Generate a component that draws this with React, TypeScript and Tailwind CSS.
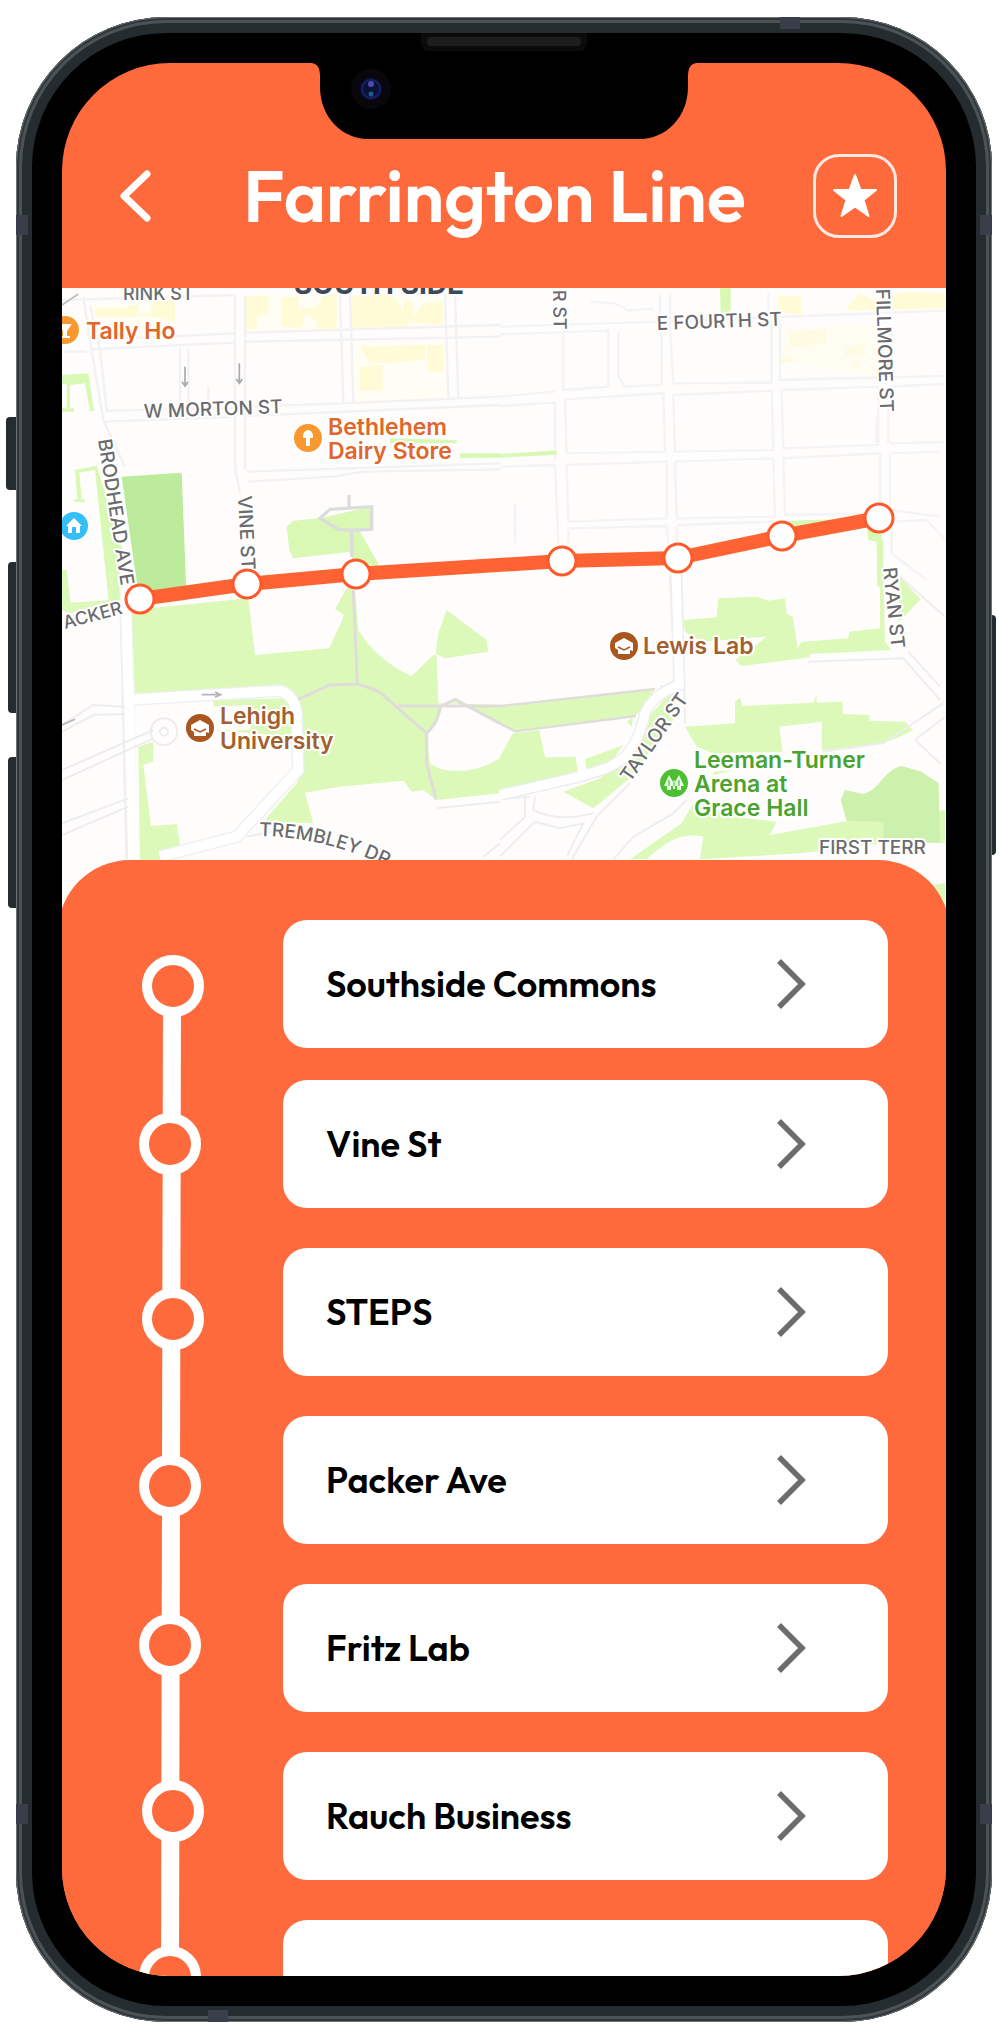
import React from 'react';

const stops = ['Southside Commons', 'Vine St', 'STEPS', 'Packer Ave', 'Fritz Lab', 'Rauch Business', ''];

/* Stations of the route diagram, in the diagram's own units */
const stations = [
  [34, 66],
  [31, 224],
  [34, 399],
  [31, 566],
  [31, 725],
  [34, 891],
  [31, 1057],
];

const routePoints = [
  [140, 599],
  [247, 584],
  [356, 574],
  [562, 561],
  [678, 558],
  [782, 536],
  [879, 518],
];

function Notch() {
  return (
    <div className="pointer-events-none absolute inset-x-0 top-0 z-20 flex justify-center">
      <svg viewBox="0 16 400 76" className="h-[76px] w-[400px]" aria-hidden="true">
        <path d="M0 0H400V16H393C387 16 384 21 384 29V40C384 70 362 92 336 92H64C38 92 16 70 16 40V29C16 21 13 16 7 16H0Z" fill="#000" />
        <circle cx="67" cy="42" r="20" fill="#0a070c" />
        <circle cx="67" cy="42" r="11" fill="#0b1238" />
        <circle cx="67" cy="42" r="9" fill="none" stroke="#13206a" strokeWidth="2" />
        <circle cx="67" cy="37" r="3" fill="#4d4aa8" />
        <circle cx="67" cy="47" r="2.5" fill="#1f5a8c" />
      </svg>
    </div>
  );
}

function CapIcon({ x, y }: { x: number; y: number }) {
  return (
    <g transform={`translate(${x} ${y})`}>
      <circle r="16" fill="#fff" />
      <circle r="14" fill="#a9561f" />
      <path d="M-9 -3L0 -8L9 -3V5L6 4V8H-6V4L-9 2Z" fill="#fff" />
      <path d="M-6 1L0 4L6 1" fill="none" stroke="#a9561f" strokeWidth="1.5" />
    </g>
  );
}

function Halo(props: React.SVGProps<SVGTextElement>) {
  return <text stroke="#fff" strokeWidth="4" strokeLinejoin="round" paintOrder="stroke" {...props} />;
}

function CityMap() {
  return (
    <svg
      viewBox="62 288 884 640"
      preserveAspectRatio="xMidYMin slice"
      className="block h-[640px] w-full font-['Inter','Liberation_Sans',sans-serif]"
      role="img"
      aria-label="Map of the Farrington Line"
    >
      <rect x="62" y="288" width="884" height="640" fill="#fefdfc" />

      {/* north west blocks */}
      <g transform="translate(50 280) scale(.33333)">
        <g fill="#fffdf4">
          <path d="M120 75L375 60V165L130 180Z" />
          <path d="M585 45L865 40V150L585 158Z" />
          <path d="M900 40H1180V145L900 150Z" />
          <path d="M900 190L1190 180V355L905 370Z" />
        </g>
        <g fill="#fffbd6">
          <path d="M135 85H235V75H265V100H300L310 65L375 55V125L310 110H135Z" />
          <path d="M585 50L655 45V100L620 110V148L585 150Z" />
          <path d="M695 52H745V88L800 80L820 45H860V150H800V125L770 100L750 148L695 135Z" />
          <path d="M900 48L1030 45L1060 100V65H1090V110L1120 70L1180 65V135L1090 125L1060 142L900 145Z" />
          <path d="M930 200L1125 195V240L960 250ZM1130 195H1180V275H1135ZM928 260L998 255V332H928Z" />
        </g>
        <g fill="none" stroke="#f2f1f3" strokeWidth="7">
          <path d="M36 60L550 45M585 158L1350 135M120 180L555 160M120 208L550 188M585 185L1350 170" />
          <path d="M100 50L125 210L160 420L225 560M120 75L150 210L170 390M45 215H110" />
          <path d="M390 205V390M415 205V370M555 45V560L570 640M585 45V570M870 40L880 365M900 40L910 370M1185 40L1195 355M1215 40L1225 355" />
          <path d="M165 392L550 385M165 425L560 410M590 380L880 370L1350 350M590 408L1350 375" />
          <path d="M590 575L1350 550M595 605L850 590L940 575L1350 568M475 320V360" />
        </g>
        <g fill="#d8f8b4">
          <path d="M36 285L115 280L132 393H120L105 310L60 315V385H72V395H36V385H50V312H36Z" />
          <path d="M75 570L140 557L245 900L235 1000H180L135 570L88 578L95 658H104V666H73V658H82Z" />
          <path d="M1020 490V475L1220 480V490ZM1230 520H1350V533L1230 534Z" />
          <path d="M710 740L730 722L810 715L960 680L968 745L930 755L990 860L910 850L900 815L730 835L718 810Z" />
        </g>
        <path d="M215 590L395 578L410 960L270 975Z" fill="#bdeb9c" />
        <path d="M905 830V750L865 748L810 715L840 688L965 680V748L905 750M897 645V680" fill="none" stroke="#dddcdc" strokeWidth="10" />
        <g fill="none" stroke="#a9a9ad" strokeWidth="5">
          <path d="M405 260V315M396 305L405 318L414 305M568 250V305M559 297L568 310L577 297" />
        </g>
        <path d="M36 75L85 42" stroke="#bbb" strokeWidth="5" />
      </g>

      {/* north east blocks */}
      <g transform="translate(500 280) scale(.33333)">
        <g fill="#fffbd6">
          <path d="M835 45L905 50V105L835 95ZM1045 75L1080 40L1120 60L1220 35L1335 40V85L1045 92Z" />
          <path d="M870 155L975 148L980 190L870 200ZM1035 205L1090 190V225L1035 228ZM1060 245H1080V262H1060ZM845 235H880V248H845Z" />
        </g>
        <path d="M835 150L1130 130V290L845 240Z" fill="#fffceb" opacity=".6" />
        <g fill="none" stroke="#f4f3f5" strokeWidth="7">
          <path d="M0 140L480 125L1335 92M0 163L325 152V320L190 330V155M355 155V290L375 320L485 315V140" />
          <path d="M480 40V125M510 40V140L520 310L815 308V120M805 40V120M840 125V300L1330 288M0 350L165 335M0 378L165 368V540M195 358L490 340L495 515L200 520Z" />
          <path d="M520 345L815 332L820 510L525 515ZM845 330L1135 320V495L850 505ZM1165 320L1335 312M1170 490L1335 486M1165 380V490" />
          <path d="M0 560L165 555L175 790M200 555L500 545V715L205 725ZM525 545L820 535L825 710L530 715ZM850 535L1140 520V700L855 705ZM1170 520L1320 515M1170 520V690L1320 710" />
          <path d="M205 745L500 738L505 790M530 735L820 725M1175 725L1280 720L1335 780M1175 725V820L1280 900M45 670V790M205 750V800M530 740V790M270 65L345 70L385 92L460 85M1130 410V490M1175 150V290" />
        </g>
        <g fill="#d8f8b4">
          <path d="M660 24H692V102H662ZM0 522L170 511V524L0 533Z" />
          <path d="M870 722L1000 718V735L870 760ZM1100 740L1145 745V780H1150V920H1132L1130 785L1105 780Z" />
        </g>
      </g>

      {/* campus, west */}
      <g transform="translate(50 570) scale(.33333)">
        <path d="M245 120L595 85L615 255L838 235L883 135L855 118L890 55L915 60L925 180C960 240 1020 290 1085 318L1150 255H1160L1165 400L1350 405V465L1215 390L1180 405L1160 460L1130 495L1140 580C1180 615 1280 610 1350 565V670L1160 690L1120 660L1085 665L1060 632L870 650L765 668L790 760L640 755L740 640L760 600L740 400L690 350L255 375Z" fill="#dcf9ba" />
        <path d="M1190 120L1310 210L1315 245L1185 265L1157 250L1165 190Z" fill="#dcf9ba" />
        <path d="M490 390L720 385L740 410L735 500L490 480Z" fill="#dcf9ba" />
        <path d="M265 530L310 515V575L280 585L303 768L380 762L392 840L330 870H270Z" fill="#dcf9ba" />
        <path d="M36 0L50 0L62 98L180 90L175 0H190V95L60 130L36 120ZM228 862L240 870H225Z" fill="#dcf9ba" />
        <path d="M490 410L600 405V480H490Z" fill="#fefdfc" />
        <path d="M225 0L245 870M225 390L690 362C720 370 740 400 740 440L745 600L560 800L330 860" fill="none" stroke="#efeef1" strokeWidth="38" />
        <path d="M225 0L250 870M225 390L690 362C720 370 740 400 740 440L745 600L560 800L330 860" fill="none" stroke="#fff" strokeWidth="30" />
        <g fill="none" stroke="#edecee" strokeWidth="6">
          <path d="M36 465L130 405L225 410M36 485L130 435L225 432M36 600L310 480M36 630L310 505M36 760L235 685M36 795L235 710M590 800L700 780M1160 715L1350 695M1300 860L1350 820" />
          <circle cx="342" cy="485" r="40" />
          <circle cx="342" cy="485" r="12" />
        </g>
        <path d="M910 60L922 342L840 345L745 388M922 342C960 355 990 360 1010 385L1130 490C1160 460 1165 440 1170 410L1215 388L1350 460M1045 408H1350M1130 490V580L1158 688" fill="none" stroke="#dfdcd9" strokeWidth="9" />
        <path d="M455 374H510M495 366L512 374L495 382M36 465L75 448" fill="none" stroke="#b5b5bb" strokeWidth="5" />
      </g>

      {/* campus, east */}
      <g transform="translate(500 570) scale(.33333)">
        <g fill="#dcf9ba">
          <path d="M0 408L465 358L420 420L405 440L45 485L0 465ZM0 560L38 490L118 480L135 562L230 560L240 610L0 665Z" />
          <path d="M395 470L380 455L400 440ZM250 570L370 525L330 580L262 608ZM500 380L530 370L520 450L395 620L280 715L190 665L300 625L400 550L430 460Z" />
          <path d="M550 150L650 142L655 85L770 80L805 92L855 85L860 132L878 140L893 235L905 215L1045 205L1048 185L1140 175V0H1150L1155 215L1175 240L930 252V262L725 288L705 270L800 200L605 215L555 185Z" />
          <path d="M1200 22L1262 88L1195 158Z" />
          <path d="M555 470L705 460V395L720 382L728 408L940 398L950 375V398L1028 395V432L1108 435V452L1215 455L1240 480C1150 530 1080 535 965 540V455L838 470L848 545L640 550L590 530Z" />
          <path d="M390 868L545 760L580 700L700 740L830 755L810 795L1030 755L1335 720V820L1310 818L1150 820L900 850L600 868L610 800C540 785 490 820 440 868Z" />
          <path d="M1300 945L1335 938V1000ZM640 605L700 600L640 615Z" />
        </g>
        <path d="M1022 690L1035 660L1090 672C1140 660 1150 600 1205 588L1265 605L1316 640L1320 818H1150V755L1040 752Z" fill="#cdf0ad" />
        <g fill="none" stroke="#eeedf0" strokeWidth="6">
          <path d="M510 20L525 340L480 350M545 20L555 460M925 275L1210 265L1320 390M1200 20L1335 140M1225 245L1320 350M1330 400L1150 520L965 545M1335 440L1245 510L1320 580" />
          <path d="M75 680V740L0 810M105 680L100 720C160 750 220 745 280 730M105 755L0 860M105 755L180 775L250 760L200 860M215 868L290 740L390 640M340 868L400 800L520 730L560 690M20 685L90 680" />
        </g>
        <path d="M528 0L538 345C480 365 450 395 435 430C400 590 330 590 240 620L0 675" fill="none" stroke="#eeedf0" strokeWidth="36" />
        <path d="M528 0L538 345C480 365 450 395 435 430C400 590 330 590 240 620L0 675M240 560L250 620" fill="none" stroke="#fff" strokeWidth="27" />
        <path d="M0 408L465 357M0 460L45 484L408 438" fill="none" stroke="#dfdcd9" strokeWidth="7" />
      </g>

      {/* street names */}
      <g fontSize="18" fontWeight="500" fill="#6b6b6e">
        <Halo x="123" y="300">RINK ST</Halo>
        <Halo x="144" y="418" fontSize="19" transform="rotate(-2 144 418)">W MORTON ST</Halo>
        <Halo x="657" y="330" fontSize="19" transform="rotate(-2 657 330)">E FOURTH ST</Halo>
        <Halo x="98" y="440" fontSize="19" transform="rotate(81 98 440)">BRODHEAD AVE</Halo>
        <Halo x="238" y="496" fontSize="19" transform="rotate(87 238 496)">VINE ST</Halo>
        <Halo x="553" y="290" transform="rotate(89 553 290)">R ST</Halo>
        <Halo x="876" y="289" fontSize="19" transform="rotate(88 876 289)">FILLMORE ST</Halo>
        <Halo x="883" y="568" fontSize="19" transform="rotate(84 883 568)">RYAN ST</Halo>
        <Halo x="65" y="629" transform="rotate(-15 65 629)">ACKER</Halo>
        <Halo x="630" y="783" fontSize="19" transform="rotate(-55 630 783)">TAYLOR ST</Halo>
        <Halo x="819" y="854" fontSize="19">FIRST TERR</Halo>
        <path id="trembley" d="M259 836Q330 837 400 873" fill="none" />
        <Halo fontSize="19"><textPath href="#trembley">TREMBLEY DR</textPath></Halo>
      </g>
      <Halo x="294" y="294" fontSize="28" fontWeight="700" fill="#3b4a56">SOUTH SIDE</Halo>

      {/* places */}
      <g fontSize="23" fontWeight="600">
        <g fill="#e2652a">
          <Halo x="86" y="339">Tally Ho</Halo>
          <Halo x="328" y="435">Bethlehem</Halo>
          <Halo x="328" y="459">Dairy Store</Halo>
        </g>
        <g fill="#a2602f">
          <Halo x="220" y="724">Lehigh</Halo>
          <Halo x="220" y="749">University</Halo>
          <Halo x="643" y="654">Lewis Lab</Halo>
        </g>
        <g fill="#4aa32f">
          <Halo x="694" y="768">Leeman-Turner</Halo>
          <Halo x="694" y="792">Arena at</Halo>
          <Halo x="694" y="816">Grace Hall</Halo>
        </g>
      </g>
      <g transform="translate(65 330)">
        <circle r="16" fill="#fff" />
        <circle r="14" fill="#f9982e" />
        <path d="M-7 -6H7L2 1V6H5V8H-5V6H-2V1Z" fill="#fff" />
      </g>
      <g transform="translate(308 438)">
        <circle r="16" fill="#fff" />
        <circle r="14" fill="#f9982e" />
        <path d="M-5 -2A5 6 0 1 1 5 -2V0H2V8H-2V0H-5Z" fill="#fff" />
      </g>
      <g transform="translate(74 526)">
        <circle r="16" fill="#fff" />
        <circle r="14" fill="#35bff5" />
        <path d="M-8 0L0 -8L8 0H6V7H2V1H-2V7H-6V0Z" fill="#fff" />
      </g>
      <CapIcon x={200} y={728} />
      <CapIcon x={624} y={646} />
      <g transform="translate(674 783)">
        <circle r="16" fill="#fff" />
        <circle r="14" fill="#4cbf33" />
        <path d="M-5 -8L-1 -1L0 -3L1 -1L5 -8L10 3H7V7H3V3H1V6H-1V3H-3V7H-7V3H-10Z" fill="#e9ffe3" />
        <path d="M-5 -3V3M5 -3V3M0 -1V3" stroke="#4cbf33" strokeWidth="1.2" />
      </g>

      {/* route */}
      <polyline points={routePoints.map((p) => p.join(',')).join(' ')} fill="none" stroke="#ff6333" strokeWidth="14" strokeLinejoin="round" />
      {routePoints.map(([x, y]) => (
        <circle key={x} cx={x} cy={y} r="14" fill="#fff" stroke="#ff5a2b" strokeWidth="3" />
      ))}
    </svg>
  );
}

function RouteDiagram() {
  return (
    <svg viewBox="0 0 68 1090" className="h-[1090px] w-[68px] shrink-0" aria-hidden="true">
      <path d="M33 66L31 1057" fill="none" stroke="#fff" strokeWidth="18" />
      {stations.map(([x, y]) => (
        <circle key={y} cx={x} cy={y} r="26" fill="#ff6a3d" stroke="#fff" strokeWidth="10" />
      ))}
    </svg>
  );
}

function AntennaBands() {
  return (
    <>
      <div className="absolute inset-x-0 inset-y-[198px] grid grid-cols-2 content-between">
        <span className="h-5 w-3 bg-[#3a3e4a]" />
        <span className="h-5 w-3 justify-self-end bg-[#3a3e4a]" />
        <span className="h-5 w-3 bg-[#3a3e4a]" />
        <span className="h-5 w-3 justify-self-end bg-[#3a3e4a]" />
      </div>
      <div className="absolute inset-x-48 inset-y-0 flex flex-col justify-between">
        <span className="h-3 w-5 self-end bg-[#3a3e4a]" />
        <span className="h-3 w-5 bg-[#3a3e4a]" />
      </div>
    </>
  );
}

export default function App() {
  return (
    <div className="flex h-screen min-h-[900px] overflow-hidden bg-white px-[3px] pt-[17px] pb-[3px] font-['Outfit','Lato',sans-serif]">
      {/* left side buttons */}
      <div className="flex w-[13px] shrink-0 flex-col items-end pt-[400px]">
        <span className="h-[73px] w-[10px] rounded-l bg-[#252c30]" />
        <span className="mt-[72px] h-[151px] w-2 rounded-l bg-[#252c30]" />
        <span className="mt-11 h-[151px] w-2 rounded-l bg-[#252c30]" />
      </div>

      <div className="relative h-full min-w-0 flex-1 rounded-[150px] bg-[#252c2f] p-4 shadow-[inset_0_0_0_1px_#6d7274,inset_0_0_0_3px_#30373a,inset_0_0_0_6px_#4c5356]">
        <AntennaBands />

        <div className="relative flex h-full flex-col rounded-[134px] bg-black px-[30px] pb-[30px]">
          <div className="flex h-[30px] shrink-0 justify-center">
            <div className="h-[18px] w-[166px] rounded-b-lg bg-[#0b0b0b] px-[6px] pt-1">
              <div className="h-[9px] rounded bg-[#1d1d1d]" />
            </div>
          </div>

          <div className="relative flex min-h-0 flex-1 flex-col overflow-hidden rounded-[108px] bg-[#ff6a3d]">
            <Notch />

            <header className="flex shrink-0 items-center justify-between pt-[91px] pr-[49px] pb-[50px] pl-[58px]">
              <button type="button" aria-label="Back" className="flex h-[52px] w-14 items-center">
                <svg viewBox="0 0 32 52" className="h-[52px] w-8" fill="none" stroke="#fff" strokeWidth="7" strokeLinecap="round" strokeLinejoin="round">
                  <path d="M27 4L4 26L27 48" />
                </svg>
              </button>
              <h1 className="text-[72px] leading-[84px] font-semibold whitespace-nowrap text-white">Farrington Line</h1>
              <button type="button" aria-label="Favorite" className="flex size-[84px] items-center justify-center rounded-[26px] border-3 border-white/85">
                <svg viewBox="0 0 46 46" className="size-[46px]" fill="#fff" stroke="#fff" strokeWidth="2" strokeLinejoin="round">
                  <path d="M23 2L28.500 17H44L31.500 27L36.500 43L23 33.500L9.500 43L14.500 27L2 17H17.500Z" />
                </svg>
              </button>
            </header>

            <main className="min-h-0 flex-1">
              <CityMap />
              <section className="relative -mx-1 -mt-[68px] flex min-h-[1120px] items-start gap-[76px] rounded-t-[72px] bg-[#ff6a3d] px-[62px] pt-[60px] pl-[81px]">
                <RouteDiagram />
                <ul className="min-w-0 flex-1">
                  {stops.map((name, i) => (
                    <li key={i} className="mb-10 first:mb-8">
                      <a
                        href={`#stop-${i + 1}`}
                        aria-label={name || 'Next stop'}
                        className="flex h-32 items-center justify-between rounded-3xl bg-white pr-[82px] pl-[43px] text-[36px] leading-[48px] font-semibold text-black"
                      >
                        <span className="whitespace-nowrap">{name}</span>
                        {name && (
                          <svg viewBox="0 0 30 52" className="h-[52px] w-[30px]" fill="none" stroke="#6b6b6b" strokeWidth="5.500">
                            <path d="M3 3L26 26L3 49" />
                          </svg>
                        )}
                      </a>
                    </li>
                  ))}
                </ul>
              </section>
            </main>
          </div>
        </div>
      </div>

      {/* power button */}
      <div className="w-1 shrink-0 pt-[598px]">
        <span className="block h-[240px] w-1 rounded-r bg-[#252c30]" />
      </div>
    </div>
  );
}
